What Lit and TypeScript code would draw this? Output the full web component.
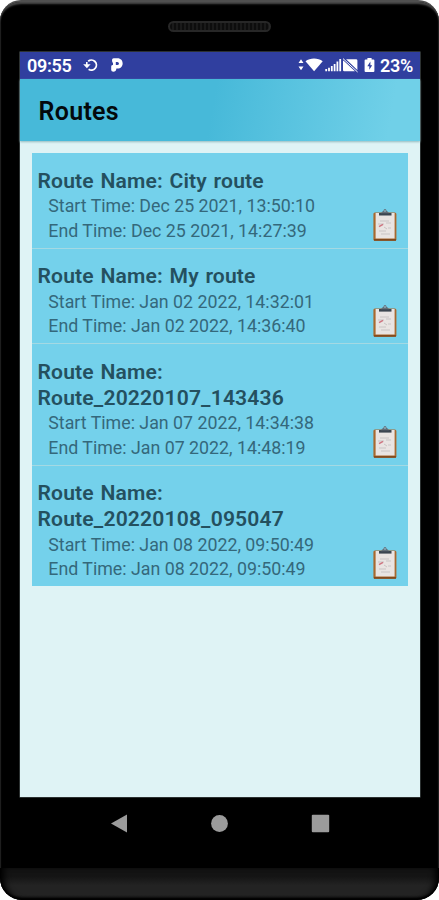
import { LitElement, html, css, svg } from "lit";
import { customElement, property } from "lit/decorators.js";

interface Route {
  name: string;
  start: string;
  end: string;
}

const ROUTES: Route[] = [
  { name: "City route", start: "Dec 25 2021, 13:50:10", end: "Dec 25 2021, 14:27:39" },
  { name: "My route", start: "Jan 02 2022, 14:32:01", end: "Jan 02 2022, 14:36:40" },
  { name: "Route_20220107_143436", start: "Jan 07 2022, 14:34:38", end: "Jan 07 2022, 14:48:19" },
  { name: "Route_20220108_095047", start: "Jan 08 2022, 09:50:49", end: "Jan 08 2022, 09:50:49" },
];

@customElement("route-item")
class RouteItem extends LitElement {
  @property({ attribute: false }) route!: Route;

  static styles = css`
    :host {
      display: flex;
      justify-content: space-between;
      align-items: flex-end;
      box-sizing: border-box;
      padding: 14.8px 10.5px 4.6px 5.5px;
      background: #74d1eb;
    }
    .text { width: 290px; }
    .name {
      margin-bottom: 0.9px;
      font-size: 21.1px;
      line-height: 25.6px;
      font-weight: 600;
      letter-spacing: 0.16px;
      word-spacing: 1.2px;
      color: #24505f;
    }
    .time {
      padding-left: 10.8px;
      font-size: 17.8px;
      line-height: 24.4px;
      white-space: nowrap;
      color: #34687b;
    }
    .clip { display: block; width: 26px; height: 34px; margin-bottom: 0.9px; }
  `;

  render() {
    return html`
      <div class="text">
        <div class="name">Route Name: ${this.route.name}</div>
        <div class="time">Start Time: ${this.route.start}</div>
        <div class="time">End Time: ${this.route.end}</div>
      </div>
      <svg class="clip" viewBox="0 0 26 34">
        <rect x="1.4" y="4.4" width="23" height="28.4" rx="1.5" fill="#a8692f" />
        <path d="M2 31.9H24" stroke="#80481d" stroke-width="1.6" />
        <rect x="3.6" y="5" width="19" height="25.5" fill="#e9e4e2" />
        <path d="M8 13h9M6 16h6M14 15h5M7 23h7M16 20h3M9 26h9M12 19l3 2" stroke="#c9c4c4" stroke-width="1" fill="none" />
        <path d="M7 18.6l4-2.2" stroke="#cf7580" stroke-width="1.6" />
        <path d="M7 5h12.5v2.6H7z" fill="#3c4650" />
        <path d="M9 5.3Q10 3.2 11.3 3Q11.8 1 13 1T14.7 3Q16 3.2 17 5.3Z" fill="#626e78" />
        <circle cx="13" cy="3" r=".8" fill="#a8d8e5" />
      </svg>
    `;
  }
}

const statusIcons = svg`
  <path d="M.5 6L3 2.2L5.5 6ZM.5 9.5H5.5L3 13.2Z" fill="#fff" />
  <path d="M7.5 4.2C12 .5 20 .5 24.7 4.2L16.1 14.3Z" fill="#fff" />
  <path d="M28.2 12v2.2M31 10.8v3.4M33.8 9v5.2M36.6 7v7.2M39.4 4.6v9.6M42.2 2v12.2" stroke="#fff" stroke-width="1.8" />
  <path d="M48.4 2.2H58q1.4 0 1.4 1.4V13L48.3 2.5ZM45.4 3.6L57 14.2H46.3q-1.3 0-1.3-1.3V4Z" fill="#fff" />
  <path d="M45 1.6L59.6 15" stroke="#fff" stroke-width="1" />
  <path d="M69.4 2.4V1h4.2v1.4h1.8q1 0 1 1V14q0 1-1 1h-7.8q-1 0-1-1V3.4q0-1 1-1Z" fill="#fff" />
  <path d="M72.4 4.6L69.3 9.2h2v3.6L74.2 8.3h-1.8Z" fill="#303f9f" />
`;

@customElement("app-root")
class AppRoot extends LitElement {
  static styles = css`
    :host {
      display: block;
      width: 439px;
      height: 900px;
      background: #fff;
      font-family: Roboto, "Liberation Sans", sans-serif;
    }
    .phone {
      display: flex;
      flex-direction: column;
      box-sizing: border-box;
      height: 900px;
      overflow: hidden;
      border-radius: 21px 21px 22px 22px;
      background: #000;
      border-top: 2px solid #505050;
      box-shadow: inset 0 3px 2px -1px #4a4a4a, inset 1px 0 1px #202020, inset -1px 0 1px #202020;
    }
    .top { display: flex; justify-content: center; height: 50px; }
    .speaker {
      box-sizing: border-box;
      width: 103px;
      height: 11px;
      margin-top: 19px;
      border: 2px solid #272727;
      border-radius: 6px;
      background: repeating-linear-gradient(90deg, #0d0d0d 0 2px, #1a1a1a 2px 4px);
    }
    .screen {
      display: flex;
      flex-direction: column;
      height: 745px;
      margin: 0 19px 0 20px;
      background: #dff3f5;
      box-shadow: 0 0 0 .5px #596363;
    }
    .status {
      display: flex;
      align-items: center;
      height: 26.5px;
      padding: 0 7px 0 7px;
      background: #303f9f;
      color: #fff;
      font-size: 18px;
      font-weight: 600;
      letter-spacing: -0.3px;
      box-sizing: border-box;
      line-height: 27px;
      flex: none;
    }
    .clock { width: 56px; }
    .sync { width: 16px; height: 16px; }
    .parking { width: 14px; height: 16px; margin-left: 11px; }
    .grow { flex: 1; }
    .icons { width: 78px; height: 16px; margin-right: 4px; }
    .bar {
      display: flex;
      align-items: center;
      height: 62.5px;
      flex: none;
      box-sizing: border-box;
      padding: 3px 18.5px 0;
      background: linear-gradient(100deg, #47b9d9 48%, #70d0e8 92%);
      box-shadow: 0 1px 2px #93babf;
      color: #03090c;
      font-size: 25px;
      font-weight: 600;
      letter-spacing: 0.3px;
    }
    .list {
      display: flex;
      flex-direction: column;
      gap: 1px;
      margin: 12px 12px 0;
      background: #a4d9e3;
    }
    .nav {
      display: flex;
      justify-content: center;
      align-items: center;
      gap: 81.5px;
      height: 52px;
      padding-left: 0.8px;
    }
    .nav svg { width: 19px; height: 19px; display: block; }
    .chin {
      margin-top: 19px;
      flex: 1;
      background: linear-gradient(#141414 0 25%, #232323 55% 85%, #111 98%);
      box-shadow: inset 7px 0 6px -3px #000, inset -7px 0 6px -3px #000, inset 0 -2px 2px #000;
      border-radius: 0 0 22px 22px;
    }
  `;

  render() {
    return html`
      <div class="phone">
        <div class="top"><div class="speaker"></div></div>
        <div class="screen">
          <div class="status">
            <span class="clock">09:55</span>
            <svg class="sync" viewBox="0 0 16 16">
              <path d="M5.2 4.2A5 5 0 1 1 5.6 12.2" fill="none" stroke="#fff" stroke-width="1.8" />
              <path d="M3.8 5V9" stroke="#fff" stroke-width="1.6" />
              <path d="M.2 7.2H7.6L3.9 11.2Z" fill="#fff" />
            </svg>
            <svg class="parking" viewBox="0 0 14 16">
              <path d="M2 3Q2 1.3 3.7 1.3H7.4C14.4 1.3 14.4 11.5 7.4 11.5H6.4Q6 14.8 3.4 14.8Q1.2 14.8 1.2 13V9.4Q1.2 8 3 8V6Q2 5.6 2 3Z" fill="#fff" />
              <path d="M5.8 5H7.4A1.5 1.5 0 0 1 7.4 8H5.8Z" fill="#303f9f" />
            </svg>
            <span class="grow"></span>
            <svg class="icons" viewBox="0 0 78 16">${statusIcons}</svg>
            <span>23%</span>
          </div>
          <div class="bar">Routes</div>
          <div class="list">
            ${ROUTES.map((r) => html`<route-item .route=${r}></route-item>`)}
          </div>
        </div>
        <div class="nav">
          <svg viewBox="0 0 19 19"><path d="M1 9.5L17 .5V18.5Z" fill="#9b9b9b" /></svg>
          <svg viewBox="0 0 19 19"><circle cx="9.5" cy="9.5" r="8.4" fill="#9b9b9b" /></svg>
          <svg viewBox="0 0 19 19"><rect x=".8" y=".8" width="17.4" height="17.4" rx="1" fill="#9b9b9b" /></svg>
        </div>
        <div class="chin"></div>
      </div>
    `;
  }
}
